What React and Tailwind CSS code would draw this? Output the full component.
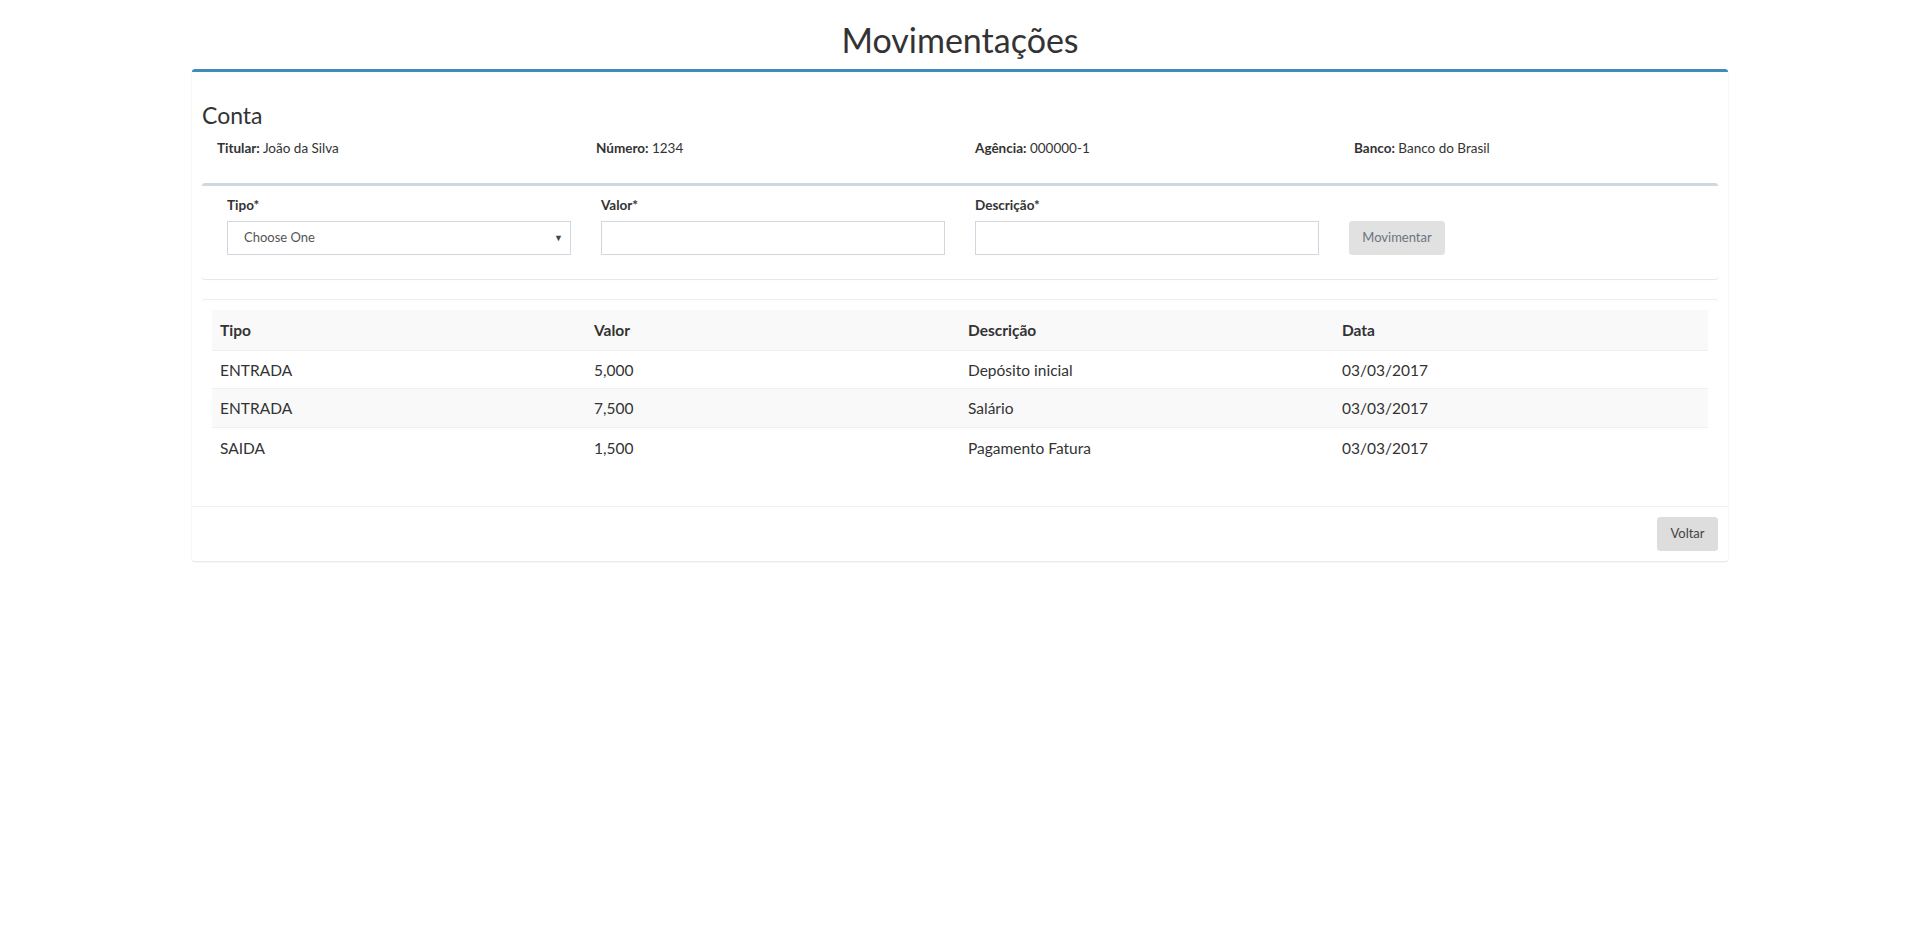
import React from 'react'

const movimentacoes = [
  { tipo: 'ENTRADA', valor: '5,000', descricao: 'Depósito inicial', data: '03/03/2017' },
  { tipo: 'ENTRADA', valor: '7,500', descricao: 'Salário', data: '03/03/2017' },
  { tipo: 'SAIDA', valor: '1,500', descricao: 'Pagamento Fatura', data: '03/03/2017' },
]

const Info = ({ label, value }) => (
  <div className="px-[15px]">
    <span className="font-bold">{label}</span> {value}
  </div>
)

const App = () => {
  return (
    <div className="min-h-screen bg-white font-[Lato,sans-serif] text-[#333]">
      <div className="mx-auto w-[1536px]">
        {/* Titulo */}
        <h1 className="mt-5 mb-[9px] text-center text-[34px] leading-[40px] font-normal">Movimentações</h1>

        <div className="rounded-[3px] border-t-[3px] border-[#3c8dbc] bg-white shadow-[0_1px_2px_rgba(0,0,0,0.12)]">
          <div className="px-[10px] pt-[10px] pb-[10px]">
            {/* Conta */}
            <h3 className="mt-5 mb-2.5 text-[23px] leading-[26px] font-normal">Conta</h3>
            <div className="grid grid-cols-4 text-[13.5px] leading-5">
              <Info label="Titular:" value="João da Silva" />
              <Info label="Número:" value="1234" />
              <Info label="Agência:" value="000000-1" />
              <Info label="Banco:" value="Banco do Brasil" />
            </div>

            {/* Formulario */}
            <div className="mt-[25px] rounded-[3px] border-t-[3px] border-[#d2d6de] bg-white px-[10px] pt-[10px] pb-[9px] shadow-[0_1px_1px_rgba(0,0,0,0.1)]">
              <div className="grid grid-cols-4">
                <div className="flex flex-col px-[15px] pb-[15px]">
                  <label className="mb-[7px] text-[13.5px] leading-[18px] font-bold">Tipo*</label>
                  <div className="flex h-[34px] items-center justify-between border border-[#d2d6de] pl-[16px] pr-[7px] text-[13px] text-[#555]">
                    <span>Choose One</span>
                    <span className="text-[9px] text-[#444]">▼</span>
                  </div>
                </div>
                <div className="flex flex-col px-[15px] pb-[15px]">
                  <label className="mb-[7px] text-[13.5px] leading-[18px] font-bold">Valor*</label>
                  <input type="text" className="h-[34px] border border-[#d2d6de] px-3 text-[13px] outline-none" />
                </div>
                <div className="flex flex-col px-[15px] pb-[15px]">
                  <label className="mb-[7px] text-[13.5px] leading-[18px] font-bold">Descrição*</label>
                  <input type="text" className="h-[34px] border border-[#d2d6de] px-3 text-[13px] outline-none" />
                </div>
                <div className="flex flex-col px-[15px] pt-[25px] pb-[15px]">
                  <button
                    disabled
                    className="h-[34px] w-[96px] rounded-[3px] border border-[#e1e1e1] bg-[#e1e1e1] text-[13px] text-[#6c7480]"
                  >
                    Movimentar
                  </button>
                </div>
              </div>
            </div>

            {/* Tabela */}
            <div className="mt-5 rounded-[3px] border-t border-[#eeeeee] bg-white px-[10px] pt-[10px] pb-[30px]">
              <table className="w-full table-fixed border-collapse text-[15.5px]">
                <tbody>
                  <tr className="h-[40px] bg-[#f9f9f9]">
                    <th className="px-2 pt-[2px] text-left font-bold">Tipo</th>
                    <th className="px-2 pt-[2px] text-left font-bold">Valor</th>
                    <th className="px-2 pt-[2px] text-left font-bold">Descrição</th>
                    <th className="px-2 pt-[2px] text-left font-bold">Data</th>
                  </tr>
                  {movimentacoes.map((mov, i) => (
                    <tr
                      key={i}
                      className={`${i === 0 ? 'h-[38px]' : 'h-[39px]'} border-t border-[#f0f0f0] ${i % 2 === 1 ? 'bg-[#f9f9f9]' : 'bg-white'}`}
                    >
                      <td className="px-2 pt-[3px]">{mov.tipo}</td>
                      <td className="px-2 pt-[3px]">{mov.valor}</td>
                      <td className="px-2 pt-[3px]">{mov.descricao}</td>
                      <td className="px-2 pt-[3px]">{mov.data}</td>
                    </tr>
                  ))}
                </tbody>
              </table>
            </div>
          </div>

          {/* Rodape */}
          <div className="flex justify-end border-t border-[#f0f0f0] p-[10px]">
            <button className="h-[34px] w-[61px] rounded-[3px] border border-[#dddddd] bg-[#dddddd] text-[13px] text-[#444]">
              Voltar
            </button>
          </div>
        </div>
      </div>
    </div>
  )
}

export default App
